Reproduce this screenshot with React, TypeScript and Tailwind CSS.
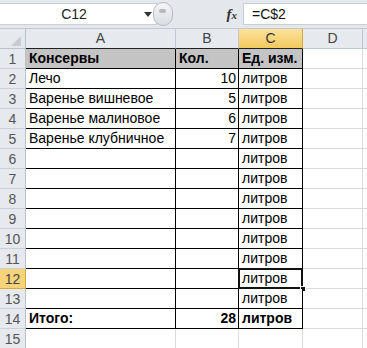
import React from "react";

type Row = { n: number; a?: string; b?: string; c?: string; bold?: boolean; fill?: boolean; table: boolean };

const rows: Row[] = [
  { n: 1, a: "Консервы", b: "Кол.", c: "Ед. изм.", bold: true, fill: true, table: true },
  { n: 2, a: "Лечо", b: "10", c: "литров", table: true },
  { n: 3, a: "Варенье вишневое", b: "5", c: "литров", table: true },
  { n: 4, a: "Варенье малиновое", b: "6", c: "литров", table: true },
  { n: 5, a: "Варенье клубничное", b: "7", c: "литров", table: true },
  { n: 6, c: "литров", table: true },
  { n: 7, c: "литров", table: true },
  { n: 8, c: "литров", table: true },
  { n: 9, c: "литров", table: true },
  { n: 10, c: "литров", table: true },
  { n: 11, c: "литров", table: true },
  { n: 12, c: "литров", table: true },
  { n: 13, c: "литров", table: true },
  { n: 14, a: "Итого:", b: "28", c: "литров", bold: true, table: true },
  { n: 15, table: false },
];

function RowHeader({ n }: { n: number }) {
  const sel = n === 12;
  return (
    <div
      className={
        "w-[26px] h-full shrink-0 flex items-center justify-center border-r border-b text-[14px] " +
        (sel
          ? "bg-[#f7d47a] border-r-[#d9a941] border-b-[#d9a941] text-[#444]"
          : "bg-[#e6e9ee] border-r-[#b9c1cc] border-b-[#c9d0da] text-[#555]")
      }
    >
      {n}
    </div>
  );
}

export default function App() {
  return (
    <div
      className="w-[367px] h-[348px] overflow-hidden bg-white flex flex-col text-black"
      style={{ fontFamily: '"Liberation Sans", Arial, sans-serif' }}
    >
      {/* Formula bar */}
      <div className="h-[29px] shrink-0 bg-[#e4e7eb] border-b border-[#c3c9d1] flex items-start pt-[3px]">
        <div className="w-[157px] h-[22px] bg-white border-y border-r border-[#c9ced6] flex items-center relative">
          <span className="flex-1 text-center text-[14px] pl-[6px] text-[#222]">C12</span>
          <svg width="8" height="5" viewBox="0 0 8 5" className="mr-[4px] ml-[2px]">
            <path d="M0 0 H8 L4 5 Z" fill="#333" />
          </svg>
        </div>
        <div className="w-[86px] h-[22px] flex items-center relative">
          <div className="w-[20px] h-[24px] -ml-[4px] rounded-full border border-[#b7bcc4] bg-gradient-to-b from-[#f4f5f7] to-[#d9dde2] flex items-center justify-center">
            <div className="w-[7px] h-[4px] rounded-full bg-[#b4b9c0] -mt-[6px] -ml-[2px]" />
          </div>
          <span
            className="ml-auto mr-[6px] text-[15px] italic font-bold text-[#333] leading-none"
            style={{ fontFamily: '"Liberation Serif", "Times New Roman", serif' }}
          >
            f<span className="text-[11px]">x</span>
          </span>
        </div>
        <div className="flex-1 h-[22px] bg-white border-y border-l border-[#c9ced6] flex items-center pl-[8px] text-[14px] text-[#111]">
          =C$2
        </div>
      </div>

      {/* Column headers */}
      <div className="h-[20px] shrink-0 flex text-[14px] text-[#444]">
        <div className="w-[26px] h-full shrink-0 bg-[#e6e9ee] border-r border-b border-[#b9c1cc] flex items-end justify-end pr-[4px] pb-[2px]">
          <svg width="10" height="10" viewBox="0 0 10 10">
            <path d="M10 0 V10 H0 Z" fill="#c7ccd4" />
          </svg>
        </div>
        <div className="w-[150px] h-full shrink-0 bg-[#e6e9ee] border-r border-[#c0c8d3] border-b border-b-[#222] flex items-center justify-center">A</div>
        <div className="w-[63px] h-full shrink-0 bg-[#e6e9ee] border-r border-[#c0c8d3] border-b border-b-[#222] flex items-center justify-center">B</div>
        <div className="w-[64px] h-full shrink-0 bg-gradient-to-b from-[#fbe29a] to-[#f3c95c] border-r border-[#d9a941] border-b border-b-[#222] flex items-center justify-center text-[#333]">C</div>
        <div className="w-[60px] h-full shrink-0 bg-[#e6e9ee] border-r border-b border-[#c0c8d3] flex items-center justify-center">D</div>
        <div className="flex-1 h-full bg-[#e6e9ee] border-b border-[#c0c8d3]" />
      </div>

      {/* Rows */}
      {rows.map((r) => {
        const tb = r.table ? "border-black" : "border-[#d9dbde]";
        const fill = r.fill ? "bg-[#c4c4c4]" : "bg-white";
        const fw = r.bold ? "font-bold" : "";
        return (
          <div key={r.n} className="h-[20px] shrink-0 flex text-[14px] leading-none">
            <RowHeader n={r.n} />
            <div className={`w-[150px] h-full shrink-0 border-r border-b ${tb} ${fill} ${fw} flex items-end pl-[3px] pb-[3px] whitespace-nowrap`}>
              {r.a}
            </div>
            <div className={`w-[63px] h-full shrink-0 border-r border-b ${tb} ${fill} ${fw} flex items-end ${r.fill ? "justify-start pl-[3px]" : "justify-end pr-[2px]"} pb-[3px]`}>
              {r.b}
            </div>
            <div className={`relative w-[64px] h-full shrink-0 border-r border-b ${tb} ${fill} ${fw} flex items-end pl-[3px] pb-[3px] whitespace-nowrap`}>
              {r.c}
              {r.n === 12 && (
                <>
                  <div className="absolute -left-[1px] -top-[1px] -right-[1px] -bottom-[1px] border-2 border-[#111]" />
                  <div className="absolute -right-[4px] -bottom-[4px] w-[6px] h-[6px] bg-[#111] border border-white" />
                </>
              )}
            </div>
            <div className="w-[60px] h-full shrink-0 border-r border-b border-[#d9dbde]" />
            <div className="flex-1 h-full border-b border-[#d9dbde]" />
          </div>
        );
      })}
    </div>
  );
}
